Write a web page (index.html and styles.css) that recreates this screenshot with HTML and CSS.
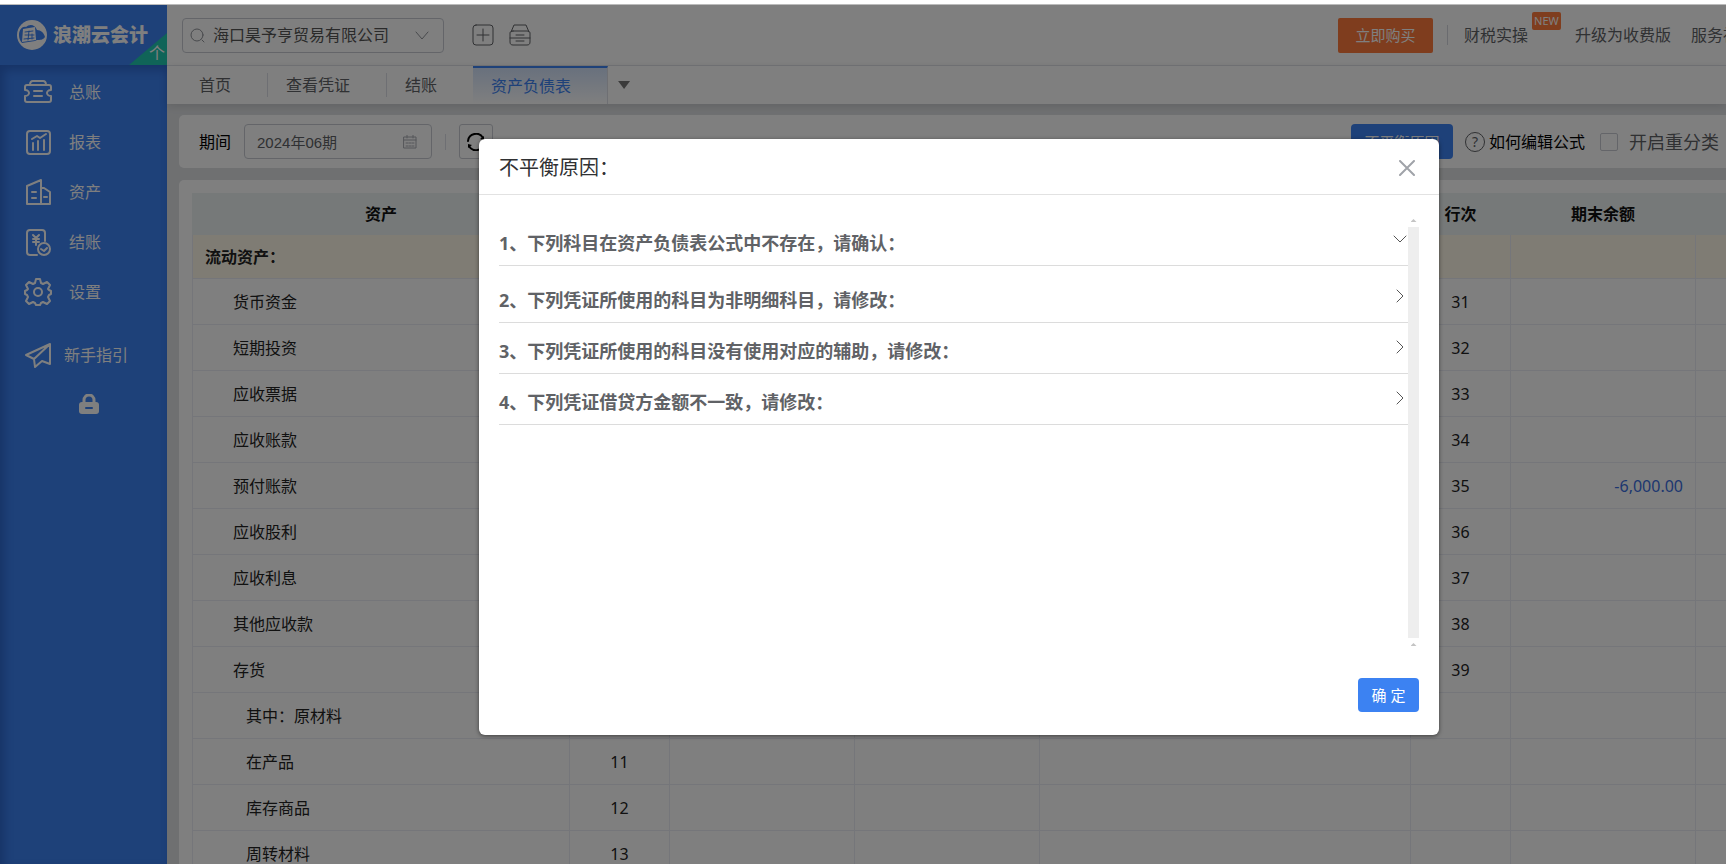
FILE: index.html
```html
<!DOCTYPE html>
<html lang="zh-CN">
<head>
<meta charset="utf-8">
<title>资产负债表 - 浪潮云会计</title>
<link rel="stylesheet" href="styles.css">
</head>
<body>
<div class="app">
  <aside class="sidebar">
    <div class="brand">
      <svg class="brand-mark" viewBox="0 0 30 30"><circle cx="15" cy="15" r="15" fill="#fff"/><path d="M2 15C2 9 6 6 9 7c3-3 9-3 11 3 4 0 7 3 8 7-2 3-5 3-8 3l-2 1-13 2C3 21 2 18 2 15z" fill="#3c82f2"/><path d="M6 9l12-2 1 13-14 2z" fill="#fff"/><path d="M8 12l8-1M8 15h9M7 19l10-1M12 11l-1 9M15 14v5" stroke="#3c82f2" fill="none"/></svg>
      <span class="brand-name">浪潮云会计</span>
      <span class="edition"><span class="edition-text">个</span></span>
    </div>
    <nav class="menu">
      <a class="menu-item" href="#"><svg viewBox="0 0 28 28"><path d="M6 7c0-3 1-4 3-4h10c2 0 3 1 3 4M3 7h22c1 0 2 1 2 2v3c-3 0-4 2-4 3s1 3 4 3v4c0 1-1 2-2 2H3c-1 0-2-1-2-2v-4c3 0 4-2 4-3s-1-3-4-3V9c0-1 1-2 2-2zM10 13h8M10 18h8"/></svg>总账</a>
      <a class="menu-item" href="#"><svg viewBox="0 0 28 28"><rect x="3" y="3" width="23" height="23" rx="3"/><path d="M8 11l5-3 3 2 6-4M9 15v7M14 13v9M20 12v10"/></svg>报表</a>
      <a class="menu-item" href="#"><svg viewBox="0 0 28 28"><path d="M3 26V8l14-6v24zM17 10h3l6 4v12h-9M8 14h4M8 20h4M20 19h3"/></svg>资产</a>
      <a class="menu-item" href="#"><svg viewBox="0 0 28 28"><path d="M13 27H6c-2 0-3-1-3-3V5c0-2 1-3 3-3h12c2 0 3 1 3 3v8M9 7l3 3 3-3M12 11v6M9 11h6M9 14h6"/><circle cx="20" cy="21" r="6"/><path d="M17 21l3 2 3-3"/></svg>结账</a>
      <a class="menu-item" href="#"><svg viewBox="0 0 28 28"><path d="M12 1h4l1 4 2 1 4-2 3 3-2 4 1 1 2 1v3l-2 1-1 2 2 4-3 3-4-2-2 1-1 2h-4l-1-2-2-1-4 2-3-3 2-4-1-2-2-1v-3l2-1 1-1-2-4 3-3 4 2 2-1z"/><circle cx="14" cy="14" r="4"/></svg>设置</a>
      <a class="menu-item guide" href="#"><svg viewBox="0 0 28 28"><path d="M2 14L26 3v20l-8-3-7 6-1-8zM26 3L10 18"/></svg>新手指引</a>
      <button class="lock" aria-label="锁定"><svg viewBox="0 0 20 20"><path d="M5 8V6a5 5 0 0 1 10 0v2" fill="none" stroke="#fff" stroke-width="3"/><rect y="8" width="20" height="12" rx="3" fill="#fff"/><path d="M7 14h6" stroke="#3c82f2" stroke-width="2" stroke-linecap="round"/></svg></button>
    </nav>
  </aside>

  <main class="main">
    <header class="topbar">
      <label class="company">
        <svg class="search-icon" viewBox="0 0 16 16"><circle cx="7" cy="8" r="6"/><path d="M12 13l2 2"/></svg>
        <input class="company-input" type="text" value="海口昊予亨贸易有限公司" aria-label="公司">
        <svg class="chevron" viewBox="0 0 14 14"><path d="M1 4l6 7 6-7"/></svg>
      </label>
      <button class="icon-button" aria-label="新增"><svg viewBox="0 0 22 22"><rect x="1" y="1" width="20" height="20" rx="3"/><path d="M11 5v12M5 11h12"/></svg></button>
      <button class="icon-button" aria-label="归档"><svg viewBox="0 0 22 22"><path d="M2 8l3-7h12l3 7M4 7h14c2 0 3 1 3 2v9c0 2-1 3-3 3H4c-2 0-3-1-3-3V9c0-1 1-2 3-2zM1 14h20M7 11h8M7 17h8"/></svg></button>
      <div class="topbar-right">
        <button class="buy">立即购买</button>
        <span class="top-divider"></span>
        <a class="top-link" href="#">财税实操<span class="badge">NEW</span></a>
        <a class="top-link upgrade" href="#">升级为收费版</a>
        <a class="top-link last" href="#">服务社</a>
      </div>
    </header>
    <nav class="tabs">
      <a class="tab" href="#">首页</a>
      <a class="tab" href="#">查看凭证</a>
      <a class="tab no-line" href="#">结账</a>
      <a class="tab active" href="#">资产负债表</a>
      <button class="more-tabs" aria-label="更多"></button>
    </nav>

    <div class="content">
      <section class="card toolbar">
        <label for="period">期间</label>
        <span class="period-box">
          <input class="period-input" id="period" type="text" value="2024年06期">
          <svg class="calendar" viewBox="0 0 14 14"><path d="M1 2h12v11H1zM1 5h12M4 0v3M10 0v3M3 8h2M6 8h2M9 8h2M3 11h2M6 11h2M9 11h2"/></svg>
        </span>
        <span class="tool-divider"></span>
        <button class="refresh" aria-label="刷新"><svg viewBox="0 0 18 18"><path d="M1 8a8 8 0 0 1 15-3M17 10a8 8 0 0 1-15 3"/><path d="M17 3v4l-4-1zM1 15v-4l4 1z" fill="#000" stroke="none"/></svg></button>
        <div class="toolbar-right">
          <button class="primary reason">不平衡原因</button>
          <a class="help" href="#"><span class="help-mark">?</span>如何编辑公式</a>
          <label class="reclass"><input class="check" type="checkbox">开启重分类</label>
        </div>
      </section>

      <section class="card sheet">
        <table class="report">
          <colgroup><col class="c-name"><col class="c-no"><col class="c-num"><col class="c-num"><col class="c-owner"><col class="c-no"><col class="c-num"><col class="c-num"></colgroup>
          <thead><tr><th>资产</th><th></th><th></th><th></th><th></th><th>行次</th><th>期末余额</th><th></th></tr></thead>
          <tbody>
            <tr class="group"><td>流动资产：</td><td></td><td></td><td></td><td></td><td></td><td></td><td></td></tr>
            <tr><td>货币资金</td><td></td><td></td><td></td><td></td><td>31</td><td></td><td></td></tr>
            <tr><td>短期投资</td><td></td><td></td><td></td><td></td><td>32</td><td></td><td></td></tr>
            <tr><td>应收票据</td><td></td><td></td><td></td><td></td><td>33</td><td></td><td></td></tr>
            <tr><td>应收账款</td><td></td><td></td><td></td><td></td><td>34</td><td></td><td></td></tr>
            <tr><td>预付账款</td><td></td><td></td><td></td><td></td><td>35</td><td class="amount">-6,000.00</td><td></td></tr>
            <tr><td>应收股利</td><td></td><td></td><td></td><td></td><td>36</td><td></td><td></td></tr>
            <tr><td>应收利息</td><td></td><td></td><td></td><td></td><td>37</td><td></td><td></td></tr>
            <tr><td>其他应收款</td><td></td><td></td><td></td><td></td><td>38</td><td></td><td></td></tr>
            <tr><td>存货</td><td></td><td></td><td></td><td></td><td>39</td><td></td><td></td></tr>
            <tr class="sub"><td>其中：原材料</td><td></td><td></td><td></td><td></td><td></td><td></td><td></td></tr>
            <tr class="sub"><td>在产品</td><td>11</td><td></td><td></td><td></td><td></td><td></td><td></td></tr>
            <tr class="sub"><td>库存商品</td><td>12</td><td></td><td></td><td></td><td></td><td></td><td></td></tr>
            <tr class="sub"><td>周转材料</td><td>13</td><td></td><td></td><td></td><td></td><td></td><td></td></tr>
          </tbody>
        </table>
      </section>
    </div>
  </main>

  <div class="overlay">
    <div class="dialog" role="dialog" aria-labelledby="dialog-title">
      <div class="dialog-head">
        <h2 class="dialog-title" id="dialog-title">不平衡原因：</h2>
        <button class="close" aria-label="关闭"><svg viewBox="0 0 16 16"><path d="M1 1l14 14M15 1L1 15"/></svg></button>
      </div>
      <div class="dialog-body">
        <div class="reasons">
          <button class="reason-row open">1、下列科目在资产负债表公式中不存在，请确认：<svg viewBox="0 0 14 14"><path d="M1 4l6 6 6-6"/></svg></button>
          <button class="reason-row">2、下列凭证所使用的科目为非明细科目，请修改：<svg viewBox="0 0 14 14"><path d="M4 1l6 6-6 6"/></svg></button>
          <button class="reason-row">3、下列凭证所使用的科目没有使用对应的辅助，请修改：<svg viewBox="0 0 14 14"><path d="M4 1l6 6-6 6"/></svg></button>
          <button class="reason-row">4、下列凭证借贷方金额不一致，请修改：<svg viewBox="0 0 14 14"><path d="M4 1l6 6-6 6"/></svg></button>
        </div>
        <div class="scroller"><span class="arrow"></span><span class="track"></span><span class="arrow"></span></div>
      </div>
      <div class="dialog-foot"><button class="primary confirm">确 定</button></div>
    </div>
  </div>
</div>
</body>
</html>
```
FILE: styles.css
```css
* { box-sizing: border-box; }
body {
  margin: 0;
  overflow: hidden;
  background: #fff;
  color: #222;
  font: 16px/24px "Noto Sans", "Noto Sans CJK SC", sans-serif;
}
a { color: inherit; text-decoration: none; }
button, input { font: inherit; color: inherit; }
button { padding: 0; border: 0; background: none; cursor: pointer; }
svg { flex: none; fill: none; stroke-linecap: round; stroke-linejoin: round; }

.app {
  position: relative;
  display: flex;
  height: calc(100vh - 4px);
  margin-top: 4px;
  border-top: 1px solid #bbb;
  overflow: hidden;
}

/* Sidebar */
.sidebar { flex: none; width: 167px; display: flex; flex-direction: column; background: #3c82f2; color: #fff; }
.brand { position: relative; display: flex; align-items: center; gap: 6px; height: 60px; padding-left: 17px; }
.brand-mark { width: 30px; height: 30px; }
.brand-name { font-size: 19px; font-weight: 900; white-space: nowrap; }
.edition {
  position: absolute; right: 0; bottom: 0;
  width: 38px; height: 32px;
  background: #20c8b0;
  clip-path: polygon(100% 0, 100% 100%, 0 100%);
}
.edition-text { position: absolute; right: 2px; bottom: 1px; font-size: 16px; line-height: 22px; }
.menu { flex: 1; display: flex; flex-direction: column; padding-top: 2px; box-shadow: inset 4px 5px 10px rgba(0, 20, 90, .25); }
.menu-item { display: flex; align-items: center; gap: 17px; height: 50px; padding-left: 24px; }
.menu-item svg { width: 28px; height: 28px; stroke: #fff; stroke-width: 2; }
.guide { gap: 12px; margin-top: 13px; }
.lock { width: 20px; height: 20px; margin: 14px 0 0 79px; }
.lock svg { display: block; width: 20px; height: 20px; }

/* Header */
.main { flex: 1; min-width: 0; display: flex; flex-direction: column; background: #dee0e3; }
.topbar { display: flex; align-items: center; height: 61px; padding-left: 15px; border-bottom: 1px solid #e4e7ed; background: #fff; color: #606266; }
.company { display: flex; align-items: center; gap: 7px; width: 262px; height: 35px; padding: 0 14px 0 7px; border: 1px solid #c8cbd2; border-radius: 4px; }
.company svg { stroke: #909399; }
.search-icon { width: 16px; height: 16px; }
.chevron { width: 14px; height: 14px; }
.company-input { flex: 1; min-width: 0; padding: 0; border: 0; background: none; outline: 0; color: #555; }
.icon-button { width: 22px; height: 22px; margin-left: 28px; }
.icon-button + .icon-button { margin-left: 15px; }
.icon-button svg { display: block; width: 22px; height: 22px; stroke: #606266; stroke-width: 1; }
.topbar-right { display: flex; align-items: center; margin-left: auto; white-space: nowrap; }
.buy { width: 95px; height: 35px; border-radius: 2px; background: #ff7a3c; color: #fff; font-size: 15px; }
.top-divider { width: 1px; height: 20px; margin: 0 16px 0 14px; background: #d4d7de; }
.top-link { position: relative; }
.badge { position: absolute; left: 68px; top: -11px; width: 29px; height: 18px; border-radius: 2px; background: #ff7a3c; color: #fff; font-size: 11px; line-height: 18px; text-align: center; }
.upgrade { margin: 0 20px 0 47px; }
.last { width: 35px; overflow: hidden; }

/* Tabs */
.tabs { position: relative; display: flex; align-items: center; height: 38px; padding-left: 14px; background: #fff; color: #606266; box-shadow: 0 2px 8px rgba(0, 0, 0, .12); }
.tab { position: relative; padding: 0 36px 0 18px; border-right: 1px solid #dcdfe6; }
.no-line { border-right: 0; }
.active { height: 38px; border-top: 2px solid #3c82f2; background: linear-gradient(#d2e2fb, #fff); color: #3c82f2; line-height: 36px; }
.more-tabs { width: 12px; height: 8px; margin-left: 10px; background: #777; clip-path: polygon(0 0, 100% 0, 50% 100%); }

/* Content */
.content { flex: 1; min-height: 0; display: flex; flex-direction: column; gap: 12px; padding: 11px 0 0 12px; overflow: hidden; }
.card { border-radius: 5px 0 0 5px; background: #fff; }
.toolbar { flex: none; display: flex; align-items: center; height: 53px; padding: 0 7px 0 20px; color: #000; }
.period-box { display: flex; align-items: center; width: 188px; height: 35px; margin-left: 13px; padding: 0 14px 0 12px; border: 1px solid #c8cbd2; border-radius: 4px; }
.period-input { flex: 1; min-width: 0; padding: 0; border: 0; outline: 0; background: none; color: #606266; font: 15px "Liberation Sans", "Noto Sans CJK SC", sans-serif; }
.calendar { width: 14px; height: 14px; stroke: #a8abb2; stroke-width: 1; }
.tool-divider { width: 1px; height: 16px; margin: 0 13px; background: #dcdfe6; }
.refresh { display: grid; place-items: center; width: 34px; height: 35px; border: 1px solid #c8cbd2; border-radius: 3px; }
.refresh svg { width: 18px; height: 18px; stroke: #000; stroke-width: 2; }
.toolbar-right { display: flex; align-items: center; margin-left: auto; white-space: nowrap; }
.primary { border-radius: 4px; background: #3c82f2; color: #fff; font-size: 15px; }
.reason { width: 102px; height: 35px; }
.help { display: flex; align-items: center; gap: 4px; margin-left: 12px; }
.help-mark { width: 20px; height: 20px; border: 1px solid #606266; border-radius: 50%; color: #606266; font-size: 14px; line-height: 18px; text-align: center; }
.reclass { display: flex; align-items: center; gap: 11px; margin-left: 15px; color: #606266; font-size: 18px; }
.check { appearance: none; width: 18px; height: 18px; margin: 0; border: 1px solid #c8cbd2; border-radius: 2px; }

.sheet { flex: 1; min-height: 0; padding: 13px 0 0 13px; border-radius: 5px 0 0 0; overflow: hidden; }
.report { table-layout: fixed; width: 1688px; border-collapse: collapse; }
.c-name { width: 377px; }
.c-no { width: 100px; }
.c-num { width: 185px; }
.c-owner { width: 371px; }
.report th, .report td { height: 46px; padding: 0; border: 1px solid #ebedf4; text-align: center; }
.report th { height: 41px; border-color: #ecf2f2; background: #ecf2f2; color: #111; }
.report td:first-child { padding-left: 40px; text-align: left; }
.report .sub td:first-child { padding-left: 53px; }
.report .group td { height: 44px; background: #fff9e8; font-weight: 700; }
.report .group td:first-child { padding-left: 12px; }
.report .amount { padding-right: 12px; color: #3c6fe0; text-align: right; }

/* Dialog */
.overlay { position: absolute; inset: 0; display: flex; align-items: flex-start; justify-content: center; padding: 134px 0 0 192px; background: rgba(0, 0, 0, .5); }
.dialog { width: 960px; border-radius: 6px; background: #fff; box-shadow: 0 1px 4px rgba(0, 0, 0, .5); }
.dialog-head { display: flex; align-items: center; justify-content: space-between; height: 56px; padding: 2px 24px 0 20px; border-bottom: 1px solid #e2e2e2; }
.dialog-title { margin: 0; color: #303133; font-size: 20px; font-weight: 400; }
.close { width: 16px; height: 16px; }
.close svg { display: block; width: 16px; height: 16px; stroke: #a0a3a9; stroke-width: 2; }
.dialog-body { display: flex; height: 454px; padding: 20px 20px 0; }
.reasons { flex: 1; display: flex; flex-direction: column; }
.reason-row { display: flex; align-items: center; justify-content: space-between; height: 51px; padding: 5px 1px 0 0; border-bottom: 1px solid #dcdcdc; color: #606266; font-size: 18px; font-weight: 700; text-align: left; }
.reason-row svg { width: 14px; height: 14px; margin-bottom: 8px; stroke: #555; stroke-width: 1; }
.open { margin-bottom: 6px; }
.scroller { display: flex; flex-direction: column; align-items: center; gap: 5px; width: 11px; padding-top: 4px; }
.arrow { flex: none; width: 6px; height: 3px; background: #c4c4c4; clip-path: polygon(50% 0, 100% 100%, 0 100%); }
.track { flex: none; width: 11px; height: 411px; background: #eee; }
.dialog-foot { display: flex; justify-content: flex-end; padding: 29px 20px 23px; }
.confirm { width: 61px; height: 34px; }
```
